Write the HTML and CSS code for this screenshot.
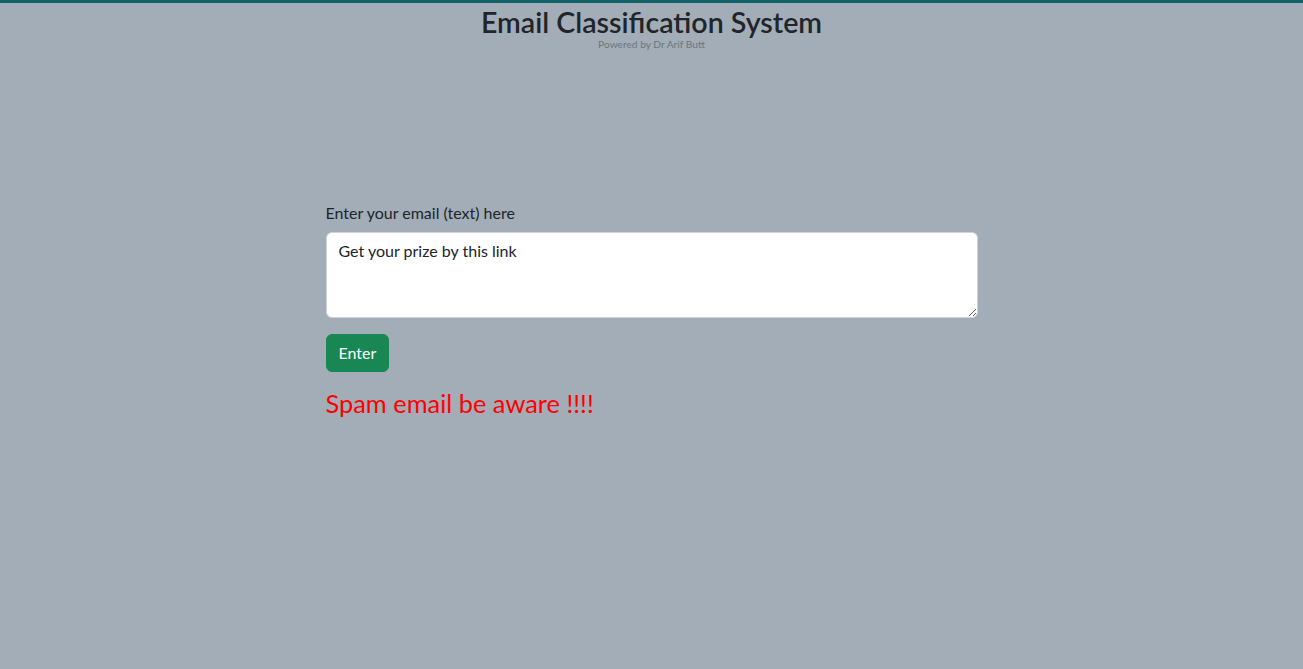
FILE: index.html
```html
<!DOCTYPE html>
<html lang="en">
<head>
<meta charset="utf-8">
<title>Email Classification System</title>
<link rel="stylesheet" href="styles.css">
</head>
<body>
<header class="header">
  <h3 class="title">Email Classification System</h3>
  <p class="powered">Powered by Dr Arif Butt</p>
</header>
<main class="main">
  <form class="form">
    <label class="label" for="email">Enter your email (text) here</label>
    <textarea class="textarea" id="email" rows="3">Get your prize by this link</textarea>
    <button type="button" class="btn">Enter</button>
  </form>
  <h4 class="result">Spam email be aware !!!!</h4>
</main>
</body>
</html>
```
FILE: styles.css
```css
html, body {
  margin: 0;
  padding: 0;
}
body {
  background: #a2adb8;
  border-top: 3px solid #0f6267;
  min-height: 666px;
  font-family: Lato, "Liberation Sans", sans-serif;
  color: #212529;
  font-size: 16px;
}
.header {
  display: flex;
  flex-direction: column;
  align-items: center;
  padding-top: 2px;
}
.title {
  margin: 0;
  font-size: 28.6px;
  font-weight: 600;
  line-height: 1.2;
}
.powered {
  margin: 0;
  font-size: 10.2px;
  color: #6c757d;
  line-height: 1.1;
}
.main {
  width: 652px;
  margin: 150px auto 0;
}
.form {
  display: flex;
  flex-direction: column;
  align-items: flex-start;
}
.label {
  font-size: 16px;
  line-height: 24px;
  margin-bottom: 7px;
}
.textarea {
  box-sizing: border-box;
  width: 100%;
  height: 86px;
  padding: 6px 12px;
  font-family: inherit;
  font-size: 16px;
  line-height: 24px;
  color: #212529;
  background: #fff;
  border: 1px solid #ced4da;
  border-radius: 6px;
  margin: 0 0 16px;
  resize: vertical;
}
.btn {
  height: 38px;
  padding: 0 12px;
  font-family: inherit;
  font-size: 16px;
  color: #fff;
  background: #198754;
  border: 1px solid #198754;
  border-radius: 6px;
}
.result {
  margin: 16px 0 0;
  color: #ff0000;
  font-size: 25.4px;
  font-weight: 400;
  line-height: 1.2;
}
```
